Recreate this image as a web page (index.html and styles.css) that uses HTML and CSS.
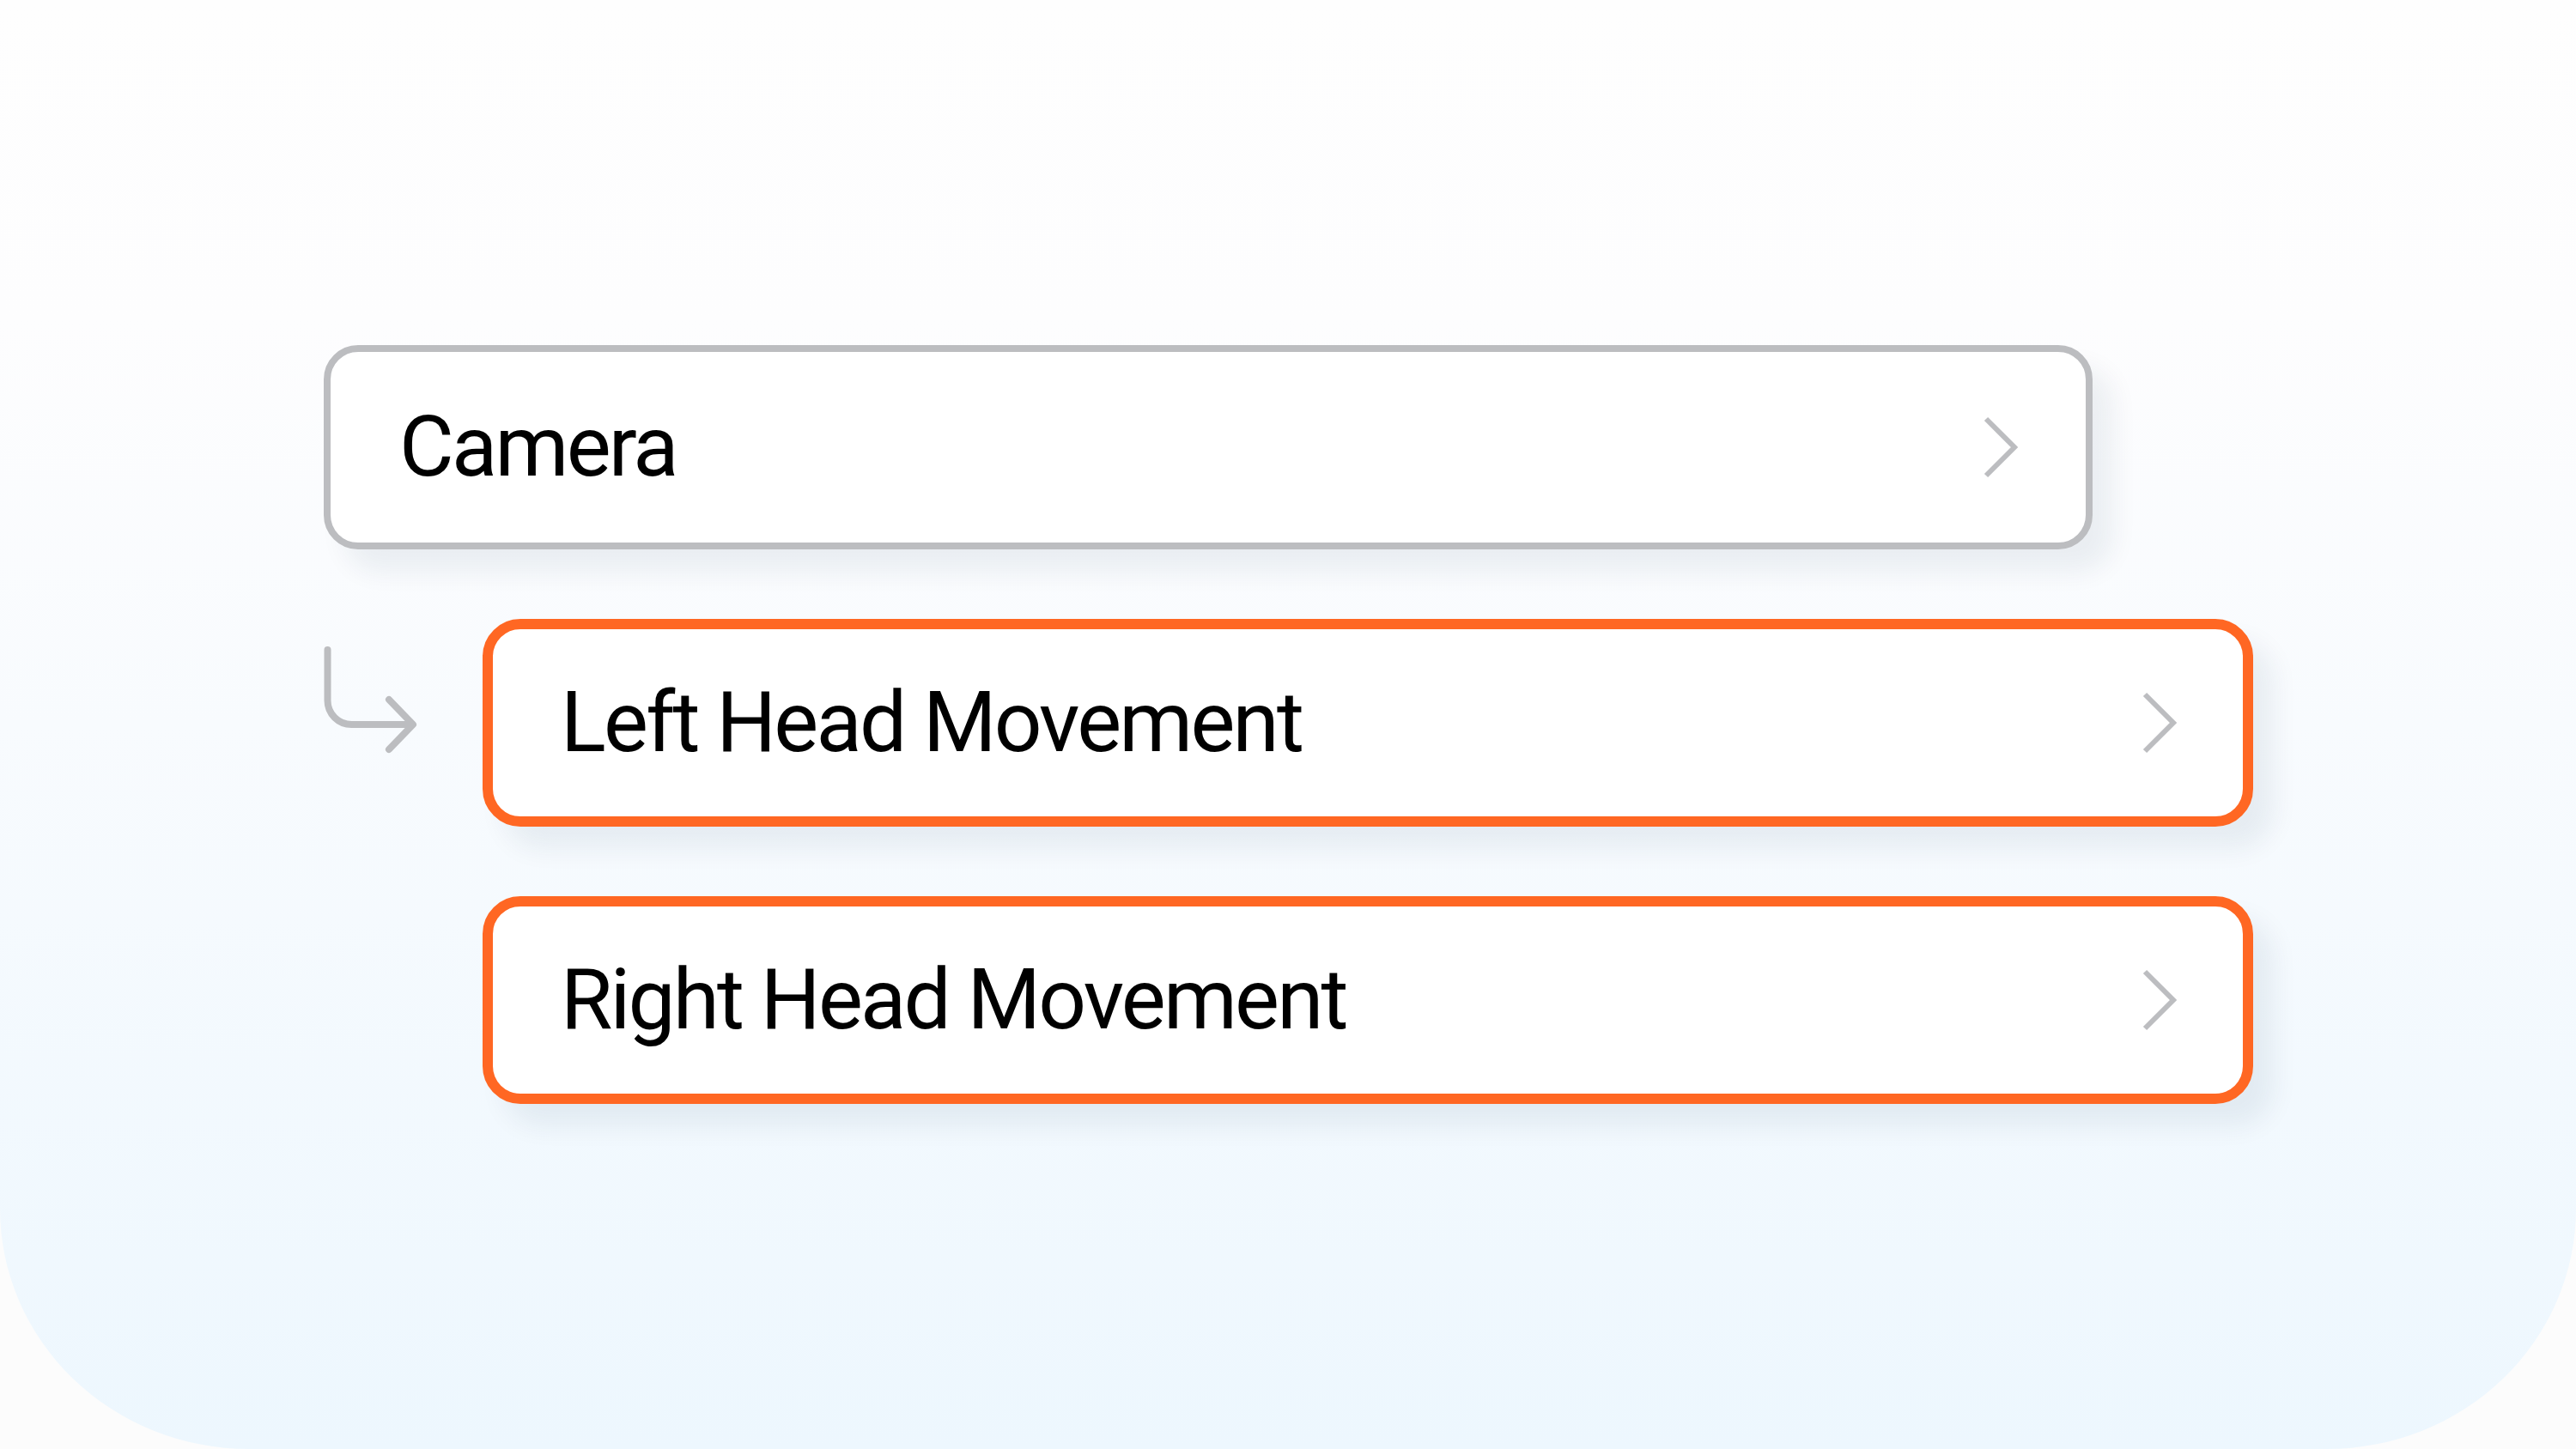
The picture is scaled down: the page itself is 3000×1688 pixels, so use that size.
FILE: index.html
```html
<!DOCTYPE html>
<html lang="en">
<head>
<meta charset="utf-8">
<title>Camera menu</title>
<link rel="stylesheet" href="styles.css">
</head>
<body>
<div class="stage">
  <div class="list">
    <div class="row">
      <div class="card card-parent">
        <span class="label">Camera</span>
        <svg class="chev" viewBox="0 0 40 72" width="40" height="72"><polyline points="3,3 36,36 3,69"/></svg>
      </div>
    </div>
    <div class="row row-sub">
      <svg class="branch" viewBox="0 0 112 132" width="112" height="132">
        <path d="M4.5 9 V68 A28 28 0 0 0 32.5 96 H103"/>
        <path d="M76 67 L104 96 L76 125"/>
      </svg>
      <div class="card card-child">
        <span class="label">Left Head Movement</span>
        <svg class="chev" viewBox="0 0 40 72" width="40" height="72"><polyline points="3,3 36,36 3,69"/></svg>
      </div>
    </div>
    <div class="row row-sub">
      <div class="spacer"></div>
      <div class="card card-child">
        <span class="label">Right Head Movement</span>
        <svg class="chev" viewBox="0 0 40 72" width="40" height="72"><polyline points="3,3 36,36 3,69"/></svg>
      </div>
    </div>
  </div>
</div>
</body>
</html>
```

FILE: styles.css
```css
html, body {
  margin: 0;
  padding: 0;
  background: #fcfcfc;
}

body {
  width: 3000px;
  height: 1688px;
  overflow: hidden;
  font-family: "Roboto", "Inter", sans-serif;
}

.stage {
  width: 3000px;
  height: 1688px;
  box-sizing: border-box;
  padding: 402px 0 0 377px;
  background: linear-gradient(180deg, #fefefe 0%, #fdfdfe 22%, #f8fbfe 50%, #edf7fe 100%);
  border-radius: 0 0 290px 290px / 0 0 280px 280px;
}

.list {
  display: flex;
  flex-direction: column;
  gap: 81px;
}

.row {
  display: flex;
  align-items: flex-start;
}

.branch {
  width: 112px;
  height: 132px;
  margin-top: 27px;
  margin-right: 73px;
  flex: none;
  fill: none;
  stroke: #bcbdc0;
  stroke-width: 8;
  stroke-linecap: round;
  stroke-linejoin: round;
}

.spacer {
  width: 185px;
  flex: none;
}

.card {
  box-sizing: border-box;
  display: flex;
  align-items: center;
  justify-content: space-between;
  background: #fff;
  box-shadow: 24px 26px 30px rgba(20, 40, 80, 0.065);
}

.card-parent {
  width: 2060px;
  height: 238px;
  border: 8px solid #bcbdc0;
  border-radius: 40px;
  padding: 0 79px 0 80px;
}

.card-child {
  width: 2062px;
  height: 242px;
  border: 12px solid #ff6723;
  border-radius: 44px;
  padding: 0 77px 0 79px;
}

.label {
  font-size: 98px;
  line-height: 1;
  color: #000;
  letter-spacing: -2.8px;
}

.chev {
  flex: none;
  fill: none;
  stroke: #bcbdc0;
  stroke-width: 6;
  stroke-linecap: butt;
  stroke-linejoin: miter;
}
```
